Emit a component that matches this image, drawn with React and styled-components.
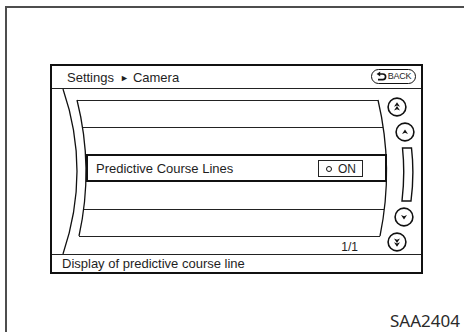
import React from "react";
import styled, { createGlobalStyle } from "styled-components";

const Global = createGlobalStyle`
  html, body { margin: 0; padding: 0; background: #fff; }
  body { font-family: "Liberation Sans", Arial, sans-serif; color: #1e1e1e; }
`;

const Page = styled.div`
  width: 464px;
  height: 332px;
  padding: 6px 0 0 5px;
  box-sizing: border-box;
  overflow: hidden;
`;

const Frame = styled.div`
  height: 326px;
  box-sizing: border-box;
  border-top: 2px solid #4d4d4d;
  border-left: 2px solid #4d4d4d;
  display: flex;
  flex-direction: column;
`;

const Screen = styled.div`
  margin: 56px 0 0 43px;
  width: 373px;
  height: 210px;
  box-sizing: border-box;
  border: 2px solid #111;
  display: flex;
  flex-direction: column;
`;

const Header = styled.div`
  height: 23px;
  box-sizing: border-box;
  border-bottom: 1px solid #222;
  display: flex;
  align-items: center;
  justify-content: space-between;
  padding: 0 5px 0 15px;
  font-size: 13px;
`;

const Crumb = styled.span`
  display: flex;
  align-items: center;
`;

const Arrow = styled.span`
  font-size: 9px;
  margin: 1px 4px 0 6px;
`;

const BackButton = styled.div`
  height: 15px;
  width: 45px;
  box-sizing: border-box;
  border: 1.5px solid #111;
  border-radius: 8px;
  display: flex;
  align-items: center;
  justify-content: center;
  gap: 1px;
  font-size: 9px;
  letter-spacing: -0.2px;
  margin-top: -2px;
`;

const Body = styled.div`
  position: relative;
  height: 165px;
  display: flex;
`;

const Curves = styled.svg`
  position: absolute;
  left: 0;
  top: 0;
  pointer-events: none;
`;

const List = styled.div`
  width: 335px;
  padding-top: 11px;
  display: flex;
  flex-direction: column;
`;

const Rule = styled.div`
  height: 1px;
  background: #222;
  margin-left: ${(p) => p.$x1 - 52}px;
  width: ${(p) => p.$x2 - p.$x1}px;
`;

const Row = styled.div`
  height: ${(p) => p.$h}px;
`;

const Selected = styled.div`
  height: 28px;
  margin-left: 34px;
  width: 301px;
  box-sizing: border-box;
  border: 2px solid #111;
  display: flex;
  align-items: center;
  justify-content: space-between;
  padding: 1px 22px 0 8px;
  font-size: 13px;
`;

const Toggle = styled.div`
  width: 45px;
  height: 17px;
  box-sizing: border-box;
  border: 1.3px solid #222;
  display: flex;
  align-items: center;
  padding-left: 7px;
  gap: 6px;
  font-size: 12px;
`;

const Dot = styled.span`
  width: 4px;
  height: 4px;
  border: 1.5px solid #111;
  border-radius: 50%;
`;

const PageNum = styled.div`
  margin-top: 4px;
  padding-right: 29px;
  text-align: right;
  font-size: 12px;
  line-height: 12px;
`;

const ScrollCol = styled.div`
  width: 34px;
  padding-top: 7.5px;
  display: flex;
  flex-direction: column;
  gap: 5px;
`;

const Knob = styled.svg`
  display: block;
  margin-left: ${(p) => p.$dx}px;
`;

const Footer = styled.div`
  flex: 1;
  border-top: 1px solid #222;
  padding-left: 10px;
  font-size: 13px;
  line-height: 17px;
`;

const Code = styled.div`
  align-self: flex-end;
  margin: 37px 4px 0 0;
  font-family: "Noto Sans", "DejaVu Sans", sans-serif;
  font-size: 17px;
  line-height: 20px;
  color: #2a2a2a;
`;

const Head = ({ y }) => (
  <path d={`M10 ${y} L13 ${y + 4.5} L10 ${y + 3.2} L7 ${y + 4.5} Z`} fill="#111" />
);

function ScrollKnob({ dx, double, down }) {
  return (
    <Knob $dx={dx} width="20" height="20" viewBox="0 0 20 20">
      <g transform={down ? "rotate(180 10 10)" : undefined}>
        <circle cx="10" cy="10" r="8.9" fill="none" stroke="#111" strokeWidth="1.6" />
        {double ? (
          <>
            <Head y={5.2} />
            <Head y={9} />
          </>
        ) : (
          <Head y={7.6} />
        )}
      </g>
    </Knob>
  );
}

function BackIcon() {
  return (
    <svg width="11" height="10" viewBox="0 0 11 10">
      <path d="M0.6 3 L4.2 0.4 L4.2 5.6 Z" fill="#111" />
      <path d="M3.5 3 H6.8 A2.8 2.8 0 0 1 6.8 8.6 H2" fill="none" stroke="#111" strokeWidth="1.7" />
    </svg>
  );
}

export default function App() {
  return (
    <Page>
      <Global />
      <Frame>
        <Screen>
          <Header>
            <Crumb>
              Settings<Arrow>►</Arrow>Camera
            </Crumb>
            <BackButton>
              <BackIcon />
              BACK
            </BackButton>
          </Header>
          <Body>
            <Curves width="369" height="165" viewBox="52 89 369 165">
              <path d="M63 89 Q91 171 63 254" fill="none" stroke="#111" strokeWidth="1.3" />
              <path d="M77 100 Q94 168 79 236" fill="none" stroke="#111" strokeWidth="1.3" />
              <path d="M378 100 Q394 168 380 236" fill="none" stroke="#111" strokeWidth="1.3" />
            </Curves>
            <List>
              <Rule $x1={77} $x2={378} />
              <Row $h={26} />
              <Rule $x1={83} $x2={383} />
              <Row $h={26} />
              <Selected>
                <span>Predictive Course Lines</span>
                <Toggle>
                  <Dot />
                  ON
                </Toggle>
              </Selected>
              <Row $h={27} />
              <Rule $x1={84} $x2={384} />
              <Row $h={26} />
              <Rule $x1={79} $x2={380} />
              <PageNum>1/1</PageNum>
            </List>
            <ScrollCol>
              <ScrollKnob dx={0} double />
              <ScrollKnob dx={8} />
              <Knob $dx={14} width="13" height="55" viewBox="0 0 13 55">
                <path
                  d="M1.5 1 H10.5 Q13.5 27 10 54 H1 Q4.2 27 1.5 1 Z"
                  fill="none"
                  stroke="#111"
                  strokeWidth="1.4"
                />
              </Knob>
              <ScrollKnob dx={6.5} down />
              <ScrollKnob dx={-0.5} double down />
            </ScrollCol>
          </Body>
          <Footer>Display of predictive course line</Footer>
        </Screen>
        <Code>SAA2404</Code>
      </Frame>
    </Page>
  );
}
